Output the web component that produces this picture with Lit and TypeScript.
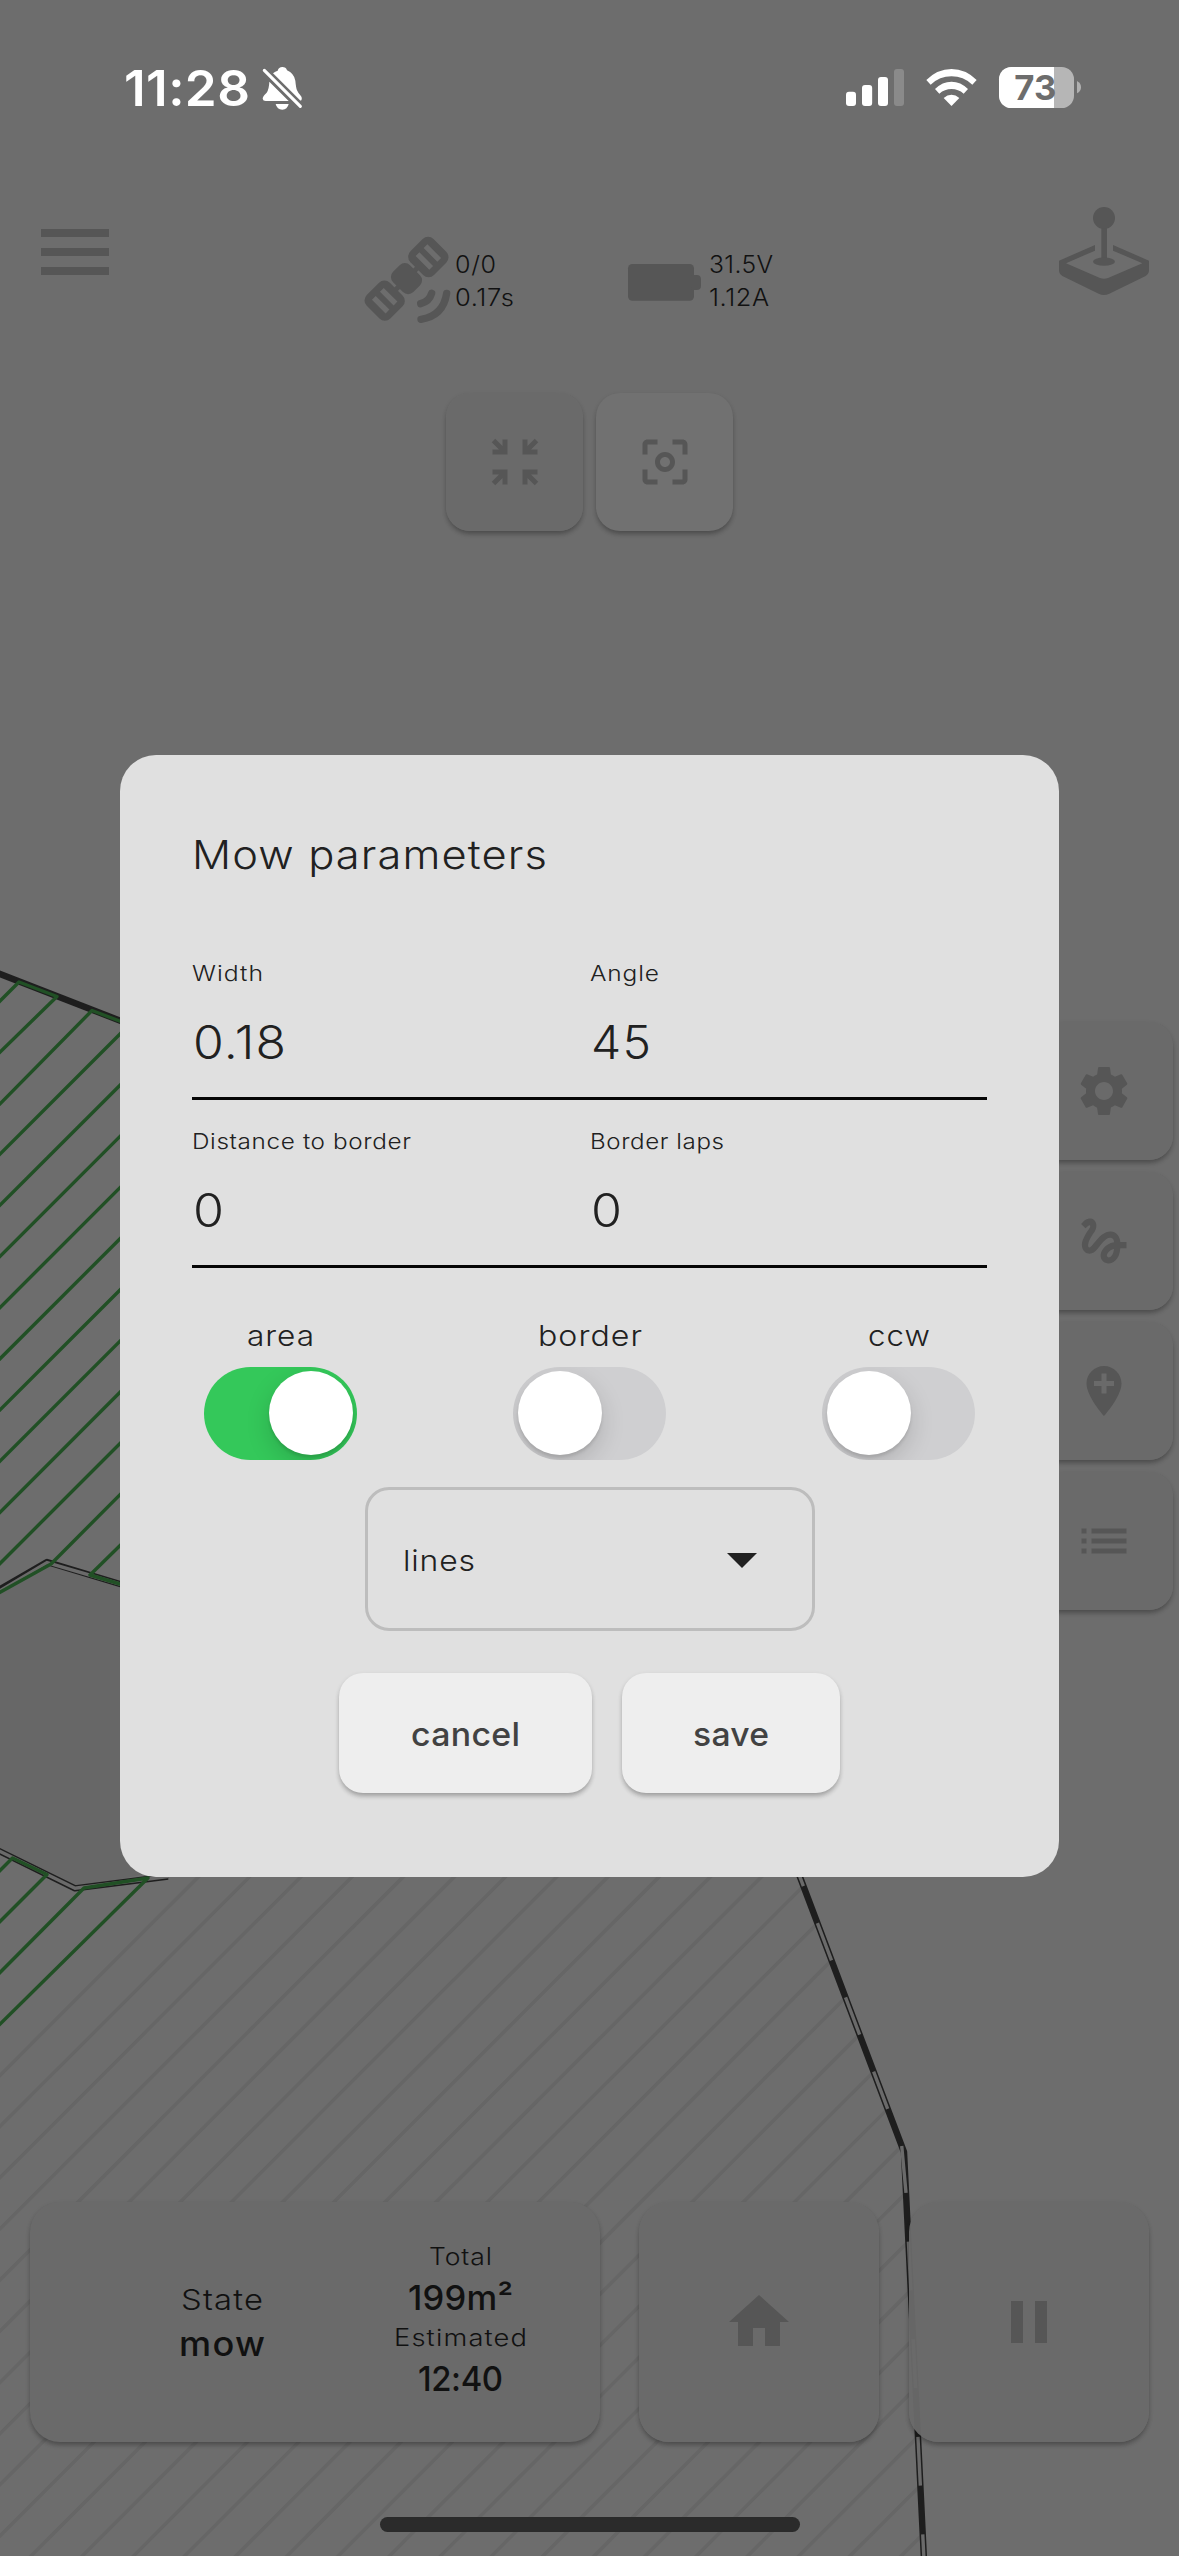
import { LitElement, html, svg, css } from "lit";
import { customElement, property, state } from "lit/decorators.js";
import { classMap } from "lit/directives/class-map.js";

const ICONS: Record<string, string> = {
  collapse:
    "M2.7 4.1L4.1 2.7L7 5.6V3H9V9H3V7H5.6ZM21.3 4.1L19.9 2.7L17 5.6V3H15V9H21V7H18.4ZM2.7 19.9L4.1 21.3L7 18.4V21H9V15H3V17H5.6ZM21.3 19.9L19.9 21.3L17 18.4V21H15V15H21V17H18.4Z",
  focus:
    "M5 15H3v4c0 1.1.9 2 2 2h4v-2H5v-4zM5 5h4V3H5c-1.1 0-2 .9-2 2v4h2V5zm14-2h-4v2h4v4h2V5c0-1.1-.9-2-2-2zm0 16h-4v2h4c1.1 0 2-.9 2-2v-4h-2v4zM12 8c-2.21 0-4 1.79-4 4s1.79 4 4 4 4-1.79 4-4-1.79-4-4-4zm0 6c-1.1 0-2-.9-2-2s.9-2 2-2 2 .9 2 2-.9 2-2 2z",
  settings:
    "M19.14 12.94c.04-.3.06-.61.06-.94 0-.32-.02-.64-.07-.94l2.03-1.58c.18-.14.23-.41.12-.61l-1.92-3.32c-.12-.22-.37-.29-.59-.22l-2.39.96c-.5-.38-1.03-.7-1.62-.94l-.36-2.54c-.04-.24-.24-.41-.48-.41h-3.84c-.24 0-.43.17-.47.41l-.36 2.54c-.59.24-1.13.57-1.62.94l-2.39-.96c-.22-.08-.47 0-.59.22L2.74 8.87c-.12.21-.08.47.12.61l2.03 1.58c-.05.3-.09.63-.09.94s.02.64.07.94l-2.03 1.58c-.18.14-.23.41-.12.61l1.92 3.32c.12.22.37.29.59.22l2.39-.96c.5.38 1.03.7 1.62.94l.36 2.54c.05.24.24.41.48.41h3.84c.24 0 .44-.17.47-.41l.36-2.54c.59-.24 1.13-.56 1.62-.94l2.39.96c.22.08.47 0 .59-.22l1.92-3.32c.12-.22.07-.47-.12-.61l-2.01-1.58zM12 15.6c-1.98 0-3.6-1.62-3.6-3.6s1.62-3.6 3.6-3.6 3.6 1.62 3.6 3.6-1.62 3.6-3.6 3.6z",
  gesture:
    "M4.59 6.89c.7-.71 1.4-1.35 1.71-1.22.5.2 0 1.03-.3 1.52-.25.42-2.86 3.89-2.86 6.31 0 1.28.48 2.34 1.34 2.98.75.56 1.74.73 2.64.46 1.07-.31 1.95-1.4 3.06-2.77 1.21-1.49 2.83-3.44 4.08-3.44 1.63 0 1.65 1.01 1.76 1.79-3.78.64-5.38 3.67-5.38 5.37 0 1.7 1.44 3.09 3.21 3.09 1.63 0 4.29-1.33 4.69-6.1H21v-2.5h-2.47c-.15-1.65-1.09-4.2-4.03-4.2-2.25 0-4.18 1.91-4.94 2.84-.58.73-2.06 2.48-2.29 2.72-.25.3-.68.84-1.11.84-.45 0-.72-.83-.36-1.92.35-1.09 1.4-2.86 1.85-3.52.78-1.14 1.3-1.92 1.3-3.28C8.95 3.69 7.31 3 6.44 3 5.12 3 3.97 4 3.72 4.25c-.36.36-.66.66-.88.93l1.75 1.71zm9.29 11.66c-.31 0-.74-.26-.74-.72 0-.6.73-2.2 2.87-2.76-.3 2.69-1.43 3.48-2.13 3.48z",
  addLocation:
    "M12 2C8.14 2 5 5.14 5 9c0 5.25 7 13 7 13s7-7.75 7-13c0-3.86-3.14-7-7-7zm4 8h-3v3h-2v-3H8V8h3V5h2v3h3v2z",
  list: "M3 13h2v-2H3v2zm0 4h2v-2H3v2zm0-8h2V7H3v2zm4 4h14v-2H7v2zm0 4h14v-2H7v2zM7 7v2h14V7H7z",
  home: "M10 20v-6h4v6h5v-8h3L12 3 2 12h3v8z",
  pause: "M6 19h4V5H6v14zm8-14v14h4V5h-4z",
};

/** Text widened to a fixed advance width, partly by glyph stretch and partly by tracking. */
@customElement("tracked-text")
export class TrackedText extends LitElement {
  @property() text = "";
  @property({ type: Number }) width = 0;

  static styles = css`
    :host {
      display: inline-block;
      white-space: pre;
    }
    .run {
      display: inline-block;
      transform-origin: 0 50%;
    }
  `;

  render() {
    return html`<span class="run">${this.text}</span>`;
  }

  updated() {
    const run = this.renderRoot.querySelector(".run") as HTMLElement;
    run.style.letterSpacing = "0px";
    run.style.marginRight = "0px";
    run.style.transform = "none";
    const natural = run.getBoundingClientRect().width;
    const gaps = this.text.length - 1;
    if (!this.width || !natural) return;
    const ratio = this.width / natural;
    const stretch = gaps < 1 ? ratio : 1 + (ratio - 1) * 0.65;
    const spacing = gaps < 1 ? 0 : (this.width / stretch - natural) / gaps;
    run.style.letterSpacing = `${spacing}px`;
    run.style.transform = `scaleX(${stretch})`;
    run.style.marginRight = `${this.width - natural - spacing * (gaps + 1)}px`;
  }
}

const t = (text: string, width: number) => html`<tracked-text .text=${text} .width=${width}></tracked-text>`;

/** The mowing map: perimeter, exclusion and the planned 45 degree lanes. */
@customElement("mow-map")
export class MowMap extends LitElement {
  static styles = css`
    :host {
      display: block;
    }
    svg {
      display: block;
    }
    .exclusion {
      fill: #676767;
    }
    .perimeter {
      fill: none;
      stroke: #1e1e1e;
      stroke-width: 6.4;
      stroke-linejoin: round;
    }
    .track {
      fill: none;
      stroke: #6a6a6a;
      stroke-width: 3.4;
    }
    .lane {
      fill: none;
      stroke: #666666;
      stroke-width: 3.4;
    }
    .done {
      fill: none;
      stroke: #215025;
      stroke-width: 3.4;
      stroke-linejoin: round;
    }
  `;

  private readonly edge: [number, number][] = [
    [760, 1772],
    [799.6, 1876],
    [904, 2152],
    [924, 2560],
  ];

  private lane(k: number) {
    return 1000.5 + 51.18 * k;
  }

  /** Point where lane k (x + y = c) meets the right edge. */
  private meet(k: number): [number, number] {
    const c = this.lane(k);
    for (let i = 0; i < this.edge.length - 1; i++) {
      const [x1, y1] = this.edge[i];
      const [x2, y2] = this.edge[i + 1];
      if (c <= x2 + y2) {
        const f = (c - x1 - y1) / (x2 + y2 - x1 - y1);
        return [x1 + (x2 - x1) * f, y1 + (y2 - y1) * f];
      }
    }
    const [x, y] = this.edge[this.edge.length - 1];
    return [x, y];
  }

  render() {
    const planned = [];
    for (let k = 21; k <= 50; k++) {
      const c = this.lane(k);
      const [x, y] = c > 2600 ? this.meet(k) : [c - 1860, 1860];
      planned.push(`M-4 ${c + 4}L${x} ${y}`);
    }
    const links = [];
    for (let k = 32; k <= 50; k += 2) {
      const a = this.meet(k);
      const b = this.meet(k + 1);
      links.push(`M${a}L${b}`);
    }
    const done = [];
    for (let k = 3; k <= 11; k++) done.push(`M-4 ${this.lane(k) + 4}L130 ${this.lane(k) - 130}`);
    return html`<svg width="1179" height="2556" viewBox="0 0 1179 2556">
      ${svg`
        <path class="exclusion" d="M0 1590L47 1562L130 1586H500V1870H165L75 1888L0 1853Z"/>
        <path class="lane" d=${planned.join("")}/>
        <path class="perimeter" d="M-4 972.5L130 1024.5"/>
        <path class="perimeter" d=${"M" + this.edge.map((p) => p.join(" ")).join("L")}/>
        <path class="track" d=${links.join("")}/>
        <path class="perimeter" d="M-4 1591.5L47 1562L130 1587"/>
        <path class="track" d="M-4 1593L47 1562.5L130 1587"/>
        <path class="perimeter" d="M-4 1849.5L75 1888.3L168 1876.5"/>
        <path class="track" d="M-4 1849.5L75 1888.3L168 1876.5"/>
        <path class="done" d=${done.join("")}/>
        <path class="done" d="M-4 1005L19 982L57 996.5L-4 1056M-4 1108L92 1010.5L130 1025"/>
        <path class="done" d="M130 1484.6L51 1564L-4 1594.5M130 1535.8L90 1575L130 1587"/>
        <path class="done" d="M-4 1874.5L12.5 1858L47 1874.5L-4 1925.5M-4 1976.5L84 1888L148 1878L-4 2028"/>
      `}
    </svg>`;
  }
}

@customElement("map-button")
export class MapButton extends LitElement {
  @property() icon = "";
  @property({ type: Number }) size = 60;
  @property({ type: Boolean, reflect: true }) lit = false;

  static styles = css`
    :host {
      display: flex;
      align-items: center;
      justify-content: center;
      width: 137.5px;
      height: 138px;
      border-radius: 24px;
      background: rgba(106, 106, 106, 0.95);
      box-shadow: 0 4px 5px -1px rgba(0, 0, 0, 0.22), 0 2px 5px rgba(0, 0, 0, 0.12);
    }
    :host([lit]) {
      background: #717171;
    }
    svg {
      display: block;
      fill: #565656;
    }
  `;

  render() {
    return html`<svg width=${this.size} height=${this.size} viewBox="0 0 24 24"><path d=${ICONS[this.icon]}></path></svg>`;
  }
}

@customElement("mow-dialog")
export class MowDialog extends LitElement {
  @state() private toggles = [
    { label: "area", width: 67, on: true },
    { label: "border", width: 104, on: false },
    { label: "ccw", width: 62, on: false },
  ];

  private rows = [
    [
      { label: "Width", lw: 71, value: "0.18", vw: 93 },
      { label: "Angle", lw: 69, value: "45", vw: 60 },
    ],
    [
      { label: "Distance to border", lw: 219, value: "0", vw: 31 },
      { label: "Border laps", lw: 134, value: "0", vw: 31 },
    ],
  ];

  static styles = css`
    :host {
      display: flex;
      flex-direction: column;
      box-sizing: border-box;
      width: 939px;
      height: 1122px;
      padding: 70px 72px 0;
      border-radius: 36px;
      background: #e0e0e0;
      color: #212121;
      font-weight: 300;
    }
    .title {
      font-size: 40px;
      line-height: 60px;
      margin-bottom: 73px;
    }
    .row {
      display: grid;
      grid-template-columns: 1fr 1fr;
      margin-bottom: 26px;
      padding-bottom: 25px;
      border-bottom: 3px solid #060606;
    }
    .label {
      font-size: 22px;
      line-height: 30px;
      margin-bottom: 24px;
    }
    .value {
      font-size: 46px;
      line-height: 60px;
      padding-left: 1px;
    }
    .toggles {
      display: flex;
      justify-content: space-between;
      padding: 0 12px;
      margin-top: 24px;
    }
    .toggle {
      display: flex;
      flex-direction: column;
      align-items: center;
      width: 153px;
      font-size: 29px;
      line-height: 36px;
      gap: 13px;
    }
    .switch {
      display: flex;
      box-sizing: border-box;
      width: 153px;
      height: 93px;
      padding: 4.5px;
      border-radius: 47px;
      overflow: hidden;
      background: #cfcfd1;
    }
    .switch.on {
      justify-content: flex-end;
      background: #34c85a;
    }
    .knob {
      width: 84px;
      height: 84px;
      border-radius: 50%;
      background: #fff;
      box-shadow: 0 9px 24px rgba(0, 0, 0, 0.15), 0 3px 3px rgba(0, 0, 0, 0.1);
    }
    .select {
      display: flex;
      align-items: center;
      justify-content: space-between;
      align-self: center;
      box-sizing: border-box;
      width: 450px;
      height: 144px;
      margin: 27px 0 42px;
      padding: 4px 55px 0 35px;
      border: 3px solid #bdbdbd;
      border-radius: 24px;
      font-size: 29px;
      line-height: 36px;
    }
    .caret {
      display: block;
      fill: #212121;
    }
    .actions {
      display: flex;
      justify-content: center;
      gap: 30px;
    }
    .btn {
      display: flex;
      align-items: center;
      justify-content: center;
      box-sizing: border-box;
      height: 120px;
      border-radius: 24px;
      background: #eeeeee;
      color: #424242;
      font-size: 33px;
      font-weight: 500;
      line-height: 40px;
      padding: 2px 71px 0;
      box-shadow: 0 4px 5px -1px rgba(0, 0, 0, 0.22), 0 2px 5px rgba(0, 0, 0, 0.12);
    }
    .btn:first-child {
      padding: 2px 72px 0;
    }
  `;

  render() {
    return html`
      <div class="title">${t("Mow parameters", 355)}</div>
      ${this.rows.map(
        (row) => html`<div class="row">
          ${row.map(
            (f) => html`<div>
              <div class="label">${t(f.label, f.lw)}</div>
              <div class="value">${t(f.value, f.vw)}</div>
            </div>`
          )}
        </div>`
      )}
      <div class="toggles">
        ${this.toggles.map(
          (g) => html`<div class="toggle">
            ${t(g.label, g.width)}
            <div class=${classMap({ switch: true, on: g.on })}><div class="knob"></div></div>
          </div>`
        )}
      </div>
      <div class="select">
        ${t("lines", 72)}
        <svg class="caret" width="30" height="15" viewBox="0 0 30 15"><path d="M0 0H30L15 15Z"></path></svg>
      </div>
      <div class="actions">
        <div class="btn">${t("cancel", 109)}</div>
        <div class="btn">${t("save", 76)}</div>
      </div>
    `;
  }
}

@customElement("app-root")
export class AppRoot extends LitElement {
  static styles = css`
    :host {
      display: block;
      width: 1179px;
      height: 2556px;
      overflow: hidden;
      background: #6d6d6d;
      color: #111111;
      font-family: Inter, "Open Sans", sans-serif;
    }
    .stage {
      display: grid;
      width: 1179px;
      height: 2556px;
    }
    .stage > * {
      grid-area: 1 / 1;
    }
    svg {
      display: block;
      flex: none;
    }
    .ink {
      fill: #565656;
    }
    .screen {
      display: flex;
      flex-direction: column;
    }
    .status {
      display: flex;
      height: 80px;
      padding: 50px 79px 60px 124px;
      color: #fff;
    }
    .clock {
      width: 136px;
      padding-top: 8px;
      font-size: 50px;
      font-weight: 600;
      line-height: 60px;
    }
    .status .phone {
      margin-left: auto;
    }
    .header {
      display: flex;
      height: 150px;
      padding-left: 41px;
      font-size: 23.5px;
      line-height: 33px;
      font-weight: 300;
    }
    .menu {
      margin-top: 39px;
    }
    .sat {
      margin: 40px 0 0 251px;
    }
    .cell {
      margin-top: 70px;
      margin-left: 105px;
    }
    .reading {
      display: flex;
      flex-direction: column;
      width: 65px;
      padding-top: 58px;
    }
    .reading.power {
      margin-left: 4px;
    }
    .joy {
      margin-left: auto;
    }
    .tools {
      display: flex;
      justify-content: center;
      gap: 12.5px;
      margin-top: 53px;
    }
    .side {
      display: flex;
      flex-direction: column;
      justify-self: end;
      gap: 12px;
      padding: 1022px 6px 0 0;
    }
    .bottom {
      display: flex;
      margin: auto 30px 75px;
    }
    .summary {
      display: flex;
      box-sizing: border-box;
      width: 570px;
      height: 240px;
      margin-right: 39px;
      border-radius: 30px;
      background: #6a6a6a;
      box-shadow: 0 4px 5px -1px rgba(0, 0, 0, 0.22), 0 2px 5px rgba(0, 0, 0, 0.12);
    }
    .stat {
      display: flex;
      flex-direction: column;
      align-items: center;
      font-weight: 300;
    }
    .stat b {
      font-size: 34px;
      font-weight: 500;
      line-height: 44px;
    }
    .stat.state {
      width: 202px;
      margin-left: 91px;
      padding-top: 79px;
      font-size: 29px;
      line-height: 38px;
    }
    .stat.state b {
      margin-top: 3px;
    }
    .stat.total {
      width: 240px;
      margin-left: 17px;
      padding-top: 36px;
      font-size: 23.5px;
      line-height: 37px;
    }
    .stat.total b {
      padding-top: 1px;
      margin-bottom: -1px;
    }
    .big {
      width: 240px;
      height: 240px;
      border-radius: 30px;
    }
    .pause {
      margin-left: 30px;
    }
    .indicator {
      align-self: center;
      width: 420px;
      height: 15px;
      margin-bottom: 24px;
      border-radius: 8px;
      background: #2b2b2b;
    }
    mow-dialog {
      place-self: start center;
      margin-top: 754.5px;
    }
  `;

  render() {
    return html`<div class="stage">
      <mow-map></mow-map>
      <div class="screen">
        <div class="status">
          <div class="clock">${t("11:28", 126)}</div>
          <svg width="50" height="80" viewBox="450 0 150 240" fill="#fff">
            <path d="M489 70Q496 64 503 62Q506 51 517 51Q528 51 531 61Q552 70 556 92Q558 113 561 121Q564 128 571 136Q578 144 574 151Q571 152 570 151Z" />
            <path d="M478 95Q477 118 470 128Q458 139 458 146Q459 153 467 153H536Z" />
            <path d="M497 162H536Q532 179 517 179Q501 179 497 162Z" />
            <path d="M463 61L571 169" stroke="#fff" stroke-width="9.5" stroke-linecap="round" />
          </svg>
          <svg class="phone" width="270" height="80" viewBox="0 0 810 240" fill="#fff">
            <rect x="48" y="125" width="30" height="43" rx="9" />
            <rect x="96" y="105" width="30.5" height="63" rx="9" />
            <rect x="144" y="81" width="30" height="87" rx="9" />
            <rect x="192" y="57" width="30" height="111" rx="9" opacity="0.2" />
            <path d="M289 90Q322 57 364.5 57Q407 57 440 90L427 104Q400 79 364.5 79Q329 79 302 104Z" />
            <path d="M315 117Q337 95 364.5 95Q392 95 414 117L401 131Q385 117 364.5 117Q344 117 328 131Z" />
            <path d="M341 144Q352 134 364.5 134Q377 134 388 144L364.5 168Z" />
            <rect x="507" y="51" width="225" height="123" rx="37" fill="#b6b6b6" />
            <path d="M672 51H544A37 37 0 0 0 507 88V137A37 37 0 0 0 544 174H672Z" />
            <path d="M741 93Q753 99 753 112Q753 124 741 130Z" fill="#b0b0b0" />
            <text x="616" y="151" text-anchor="middle" font-size="104" font-weight="700" fill="#6d6d6d" textLength="126" lengthAdjust="spacingAndGlyphs">73</text>
          </svg>
        </div>
        <div class="header">
          <svg class="ink menu" width="68" height="46" viewBox="0 0 68 46">
            <path d="M0 0H68V8H0ZM0 19H68V27H0ZM0 38H68V46H0Z" />
          </svg>
          <svg class="sat" width="95" height="100" viewBox="60 60 285 300" fill="#565656">
            <path d="M134 272L265 141" stroke="#565656" stroke-width="15" />
            <g transform="translate(265 141) rotate(45)">
              <rect x="-50" y="-49" width="100" height="98" rx="23" />
              <path d="M-29 -25H29V-9H-29ZM-29 9H29V25H-29Z" fill="#6d6d6d" />
            </g>
            <g transform="translate(134 272) rotate(45)">
              <rect x="-50" y="-49" width="100" height="98" rx="23" />
              <path d="M-29 -25H29V-9H-29ZM-29 9H29V25H-29Z" fill="#6d6d6d" />
            </g>
            <rect x="-43" y="-36" width="86" height="72" rx="22" transform="translate(199.5 206) rotate(45)" />
            <path d="M242 281Q268 275 275 250M243 328Q310 318 320 250" fill="none" stroke="#565656" stroke-width="22" stroke-linecap="round" />
          </svg>
          <div class="reading">${t("0/0", 41)}${t("0.17s", 59)}</div>
          <svg class="ink cell" width="80" height="50" viewBox="855 150 240 150">
            <rect x="864" y="162" width="198" height="110" rx="13" />
            <path d="M1055 195H1070Q1083 195 1083 208V227Q1083 240 1070 240H1055Z" />
          </svg>
          <div class="reading power">${t("31.5V", 64)}${t("1.12A", 60)}</div>
          <svg class="ink joy" width="139" height="120" viewBox="0 0 417 360">
            <path d="M57 212L165 165V182L78 219.500L180 264Q192 269 204 264L307 219.500L219 182V165L327 212V241Q327 252 317 258L208 311Q192 319 176 311L67 258Q57 252 57 241Z" />
            <rect x="184" y="110" width="17" height="100" />
            <circle cx="192" cy="84" r="33" />
            <ellipse cx="192" cy="215" rx="33" ry="12.500" />
          </svg>
        </div>
        <div class="tools">
          <map-button icon="collapse"></map-button>
          <map-button icon="focus" lit></map-button>
        </div>
        <div class="bottom">
          <div class="summary">
            <div class="stat state">${t("State", 82)}<b>${t("mow", 86)}</b></div>
            <div class="stat total">
              ${t("Total", 63)}<b>${t("199m²", 105)}</b>${t("Estimated", 133)}<b>${t("12:40", 85)}</b>
            </div>
          </div>
          <map-button class="big" icon="home" size="72"></map-button>
          <map-button class="big pause" icon="pause" size="72"></map-button>
        </div>
        <div class="indicator"></div>
      </div>
      <div class="side">
        <map-button icon="settings"></map-button>
        <map-button icon="gesture"></map-button>
        <map-button icon="addLocation"></map-button>
        <map-button icon="list"></map-button>
      </div>
      <mow-dialog></mow-dialog>
    </div>`;
  }
}
